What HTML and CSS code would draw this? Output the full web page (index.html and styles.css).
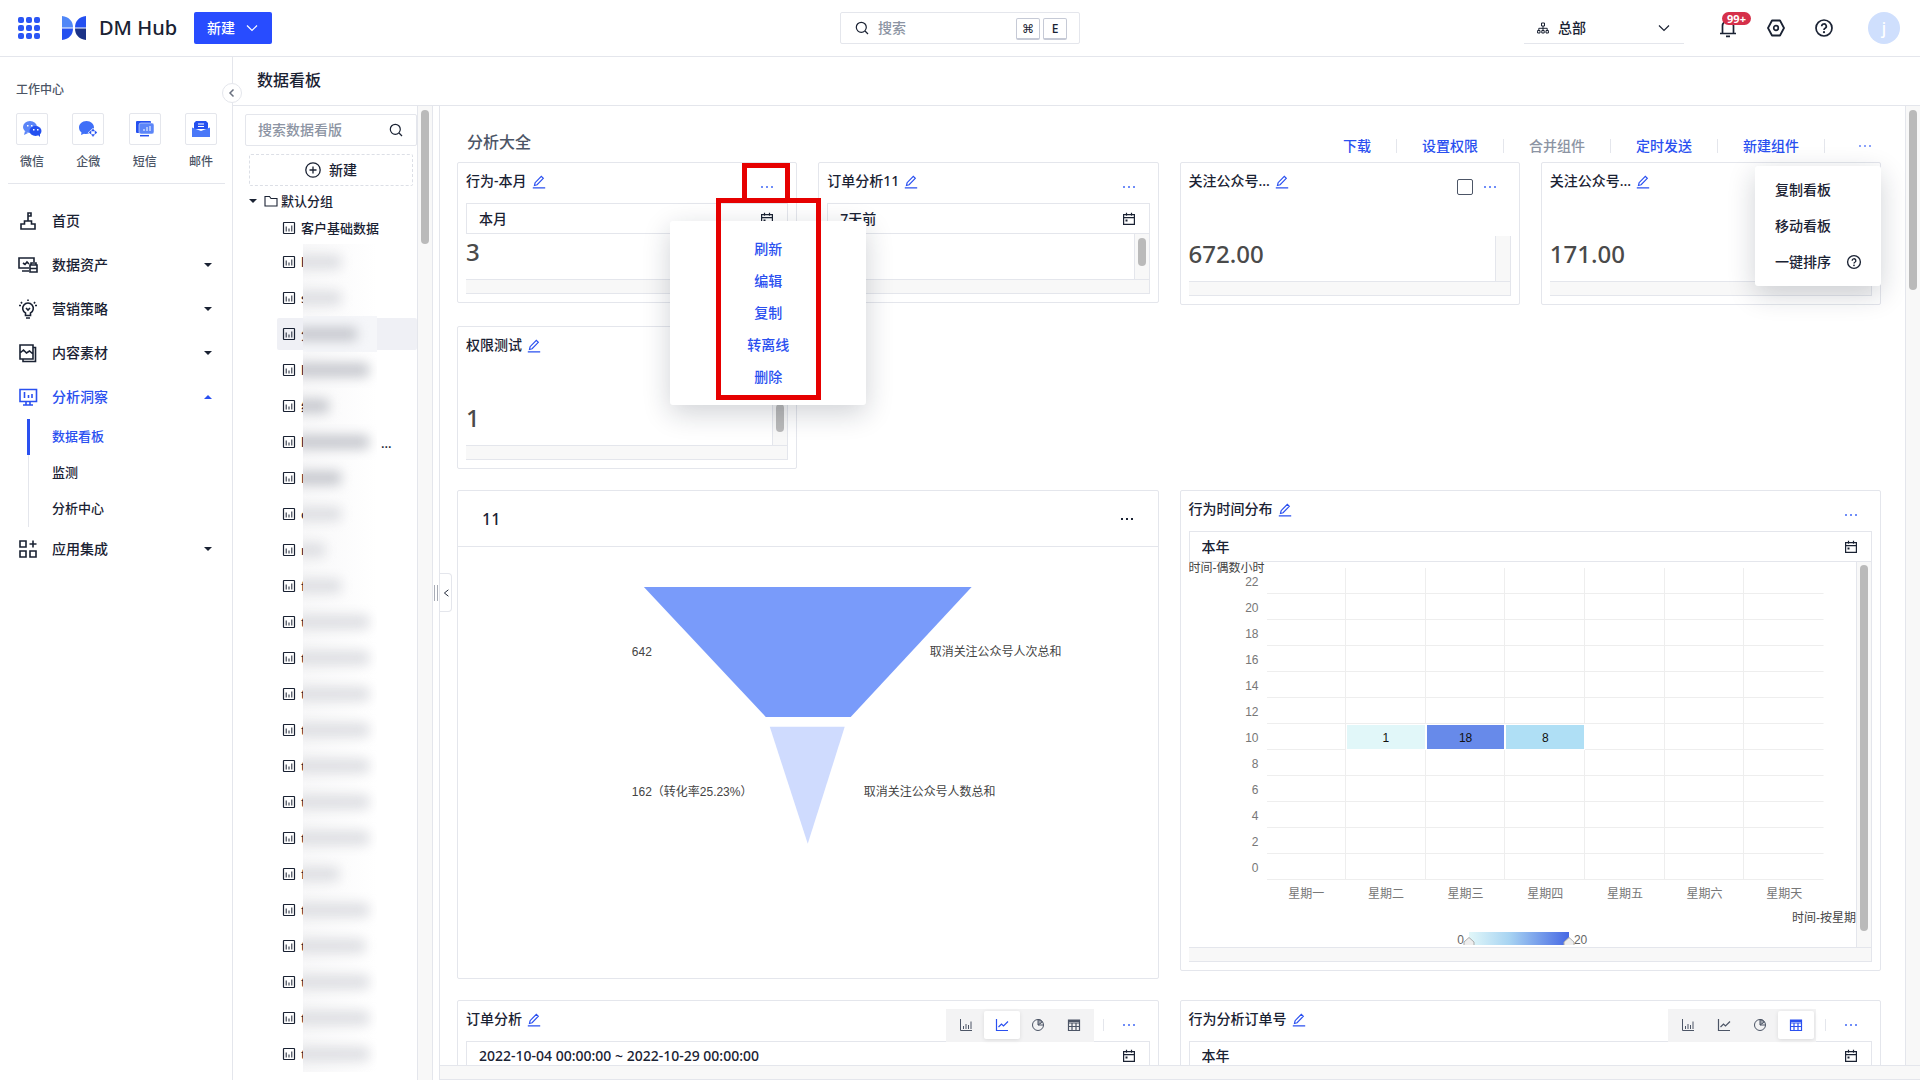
FILE: index.html
```html
<!DOCTYPE html>
<html lang="zh-CN">
<head>
<meta charset="utf-8">
<title>DM Hub - 数据看板</title>
<link rel="stylesheet" href="styles.css">
</head>
<body>
<svg class="sprite" aria-hidden="true">
  <symbol id="edit" viewBox="0 0 14 14"><path d="M2.5 10.5l.6-2.8 6.2-6.4 2 2-6.2 6.4zM.8 12.8h12.4" fill="none" stroke="currentColor" stroke-width="1.2"/></symbol>
  <symbol id="dots" viewBox="0 0 14 4"><path d="M1 1h2v2H1zM6 1h2v2H6zM11 1h2v2h-2z" fill="currentColor"/></symbol>
  <symbol id="calendar" viewBox="0 0 14 14"><path d="M1.6 2.6h10.8v9.8H1.600zM1.600 5.600h10.800M4.500.8v3M9.500.8v3" fill="none" stroke="currentColor" stroke-width="1.200"/><path d="M3.500 7.500h2v2h-2z" fill="currentColor"/></symbol>
  <symbol id="search" viewBox="0 0 14 14"><circle cx="6.300" cy="6.300" r="5" fill="none" stroke="currentColor" stroke-width="1.200"/><path d="M10 10l3 3" stroke="currentColor" stroke-width="1.200"/></symbol>
  <symbol id="board" viewBox="0 0 14 14"><rect x="1.500" y="1.500" width="11" height="11" rx=".5" fill="none" stroke="currentColor" stroke-width="1.200"/><path d="M4.200 5.500v5M7 7.500v3M9.800 4.500v6" stroke="currentColor"/></symbol>
  <symbol id="help" viewBox="0 0 20 20"><circle cx="10" cy="10" r="8" fill="none" stroke="currentColor" stroke-width="1.700"/><path d="M7.700 8.300a2.300 2.300 0 1 1 3.400 2c-.8.400-1.100.8-1.100 1.700" fill="none" stroke="currentColor" stroke-width="1.700"/><circle cx="10" cy="14.200" r="1.100" fill="currentColor"/></symbol>
  <symbol id="chevron" viewBox="0 0 12 12"><path d="M1 3.500l5 5 5-5" fill="none" stroke="currentColor" stroke-width="1.200"/></symbol>
  <symbol id="bars" viewBox="0 0 14 14"><path d="M1.500 1v11.500H13M4.500 8v3M7 6v5M9.500 7v4M12 3.500V11" fill="none" stroke="currentColor"/></symbol>
  <symbol id="line" viewBox="0 0 14 14"><path d="M1.500 1v11.500H13M3.500 9l3-3 2 2L13 3.500" fill="none" stroke="currentColor" stroke-width="1.200"/></symbol>
  <symbol id="pie" viewBox="0 0 14 14"><circle cx="7" cy="7" r="5.500" fill="none" stroke="currentColor"/><path d="M7 1.500V7l4.500-3A5.500 5.500 0 0 0 7 1.500zM7 7h5.500" fill="currentColor" fill-opacity=".5" stroke="currentColor"/></symbol>
  <symbol id="table" viewBox="0 0 14 14"><path d="M1.500 2h11v10.500h-11zM1.500 5h11M1.500 8.500h11M5 5v7.500M9 5v7.500" fill="none" stroke="currentColor" stroke-width="1.200"/><path d="M1.500 2h11v2h-11z" fill="currentColor"/></symbol>
</svg>

<header class="topbar">
  <div class="brand">
    <button class="icon-btn" aria-label="应用"><svg class="apps" viewBox="0 0 22 22"><g fill="#2b56f5"><rect width="6" height="6" rx="2"/><rect x="8" width="6" height="6" rx="2"/><rect x="16" width="6" height="6" rx="2"/><rect y="8" width="6" height="6" rx="2"/><rect x="8" y="8" width="6" height="6" rx="2"/><rect x="16" y="8" width="6" height="6" rx="2"/><rect y="16" width="6" height="6" rx="2"/><rect x="8" y="16" width="6" height="6" rx="2"/><rect x="16" y="16" width="6" height="6" rx="2"/></g></svg></button>
    <svg class="logo" viewBox="0 0 24 24"><path d="M0 0c7 1 11 5 11 11.500H0z" fill="#5087f7"/><path d="M0 12.500h11C11 19 7 23 0 24z" fill="#2450f0"/><path d="M24 0c-7 1-11 5-11 11.500h11z" fill="#2450f0"/><path d="M24 12.500H13C13 19 17 23 24 24z" fill="#1b3388"/></svg>
    <span class="brand-name">DM Hub</span>
    <button class="create">新建 <svg class="i12"><use href="#chevron"/></svg></button>
  </div>
  <label class="search"><svg class="i14"><use href="#search"/></svg><input type="text" placeholder="搜索" aria-label="搜索"><kbd>⌘</kbd><kbd>E</kbd></label>
  <div class="tools">
    <label class="org"><svg class="i12" viewBox="0 0 12 12"><path d="M4.500 1h3v3h-3zM.600 8.500h2.400v2.500H.600zM4.800 8.500h2.400v2.500H4.800zM9 8.500h2.400v2.500H9zM6 4v4.500M1.800 8.500V6.300h8.400v2.200" fill="none" stroke="currentColor"/></svg><select aria-label="组织"><option>总部</option></select><svg class="i12"><use href="#chevron"/></svg></label>
    <button class="icon-btn bell" aria-label="通知"><svg class="i20" viewBox="0 0 20 20"><path d="M4.500 15V8a5.500 5.500 0 0 1 11 0v7M2 15.500h16M8 18.300h4" fill="none" stroke="currentColor" stroke-width="1.700"/></svg><span class="badge">99+</span></button>
    <button class="icon-btn" aria-label="设置"><svg class="i20" viewBox="0 0 20 20"><path d="M6 2.500h8l4 7.500-4 7.500H6L2 10z" fill="none" stroke="currentColor" stroke-width="1.800" stroke-linejoin="round"/><circle cx="10" cy="10" r="2.300" fill="none" stroke="currentColor" stroke-width="1.700"/></svg></button>
    <button class="icon-btn" aria-label="帮助"><svg class="i20"><use href="#help"/></svg></button>
    <button class="avatar">j</button>
  </div>
</header>

<div class="shell">
  <aside class="sidebar">
    <p class="side-title">工作中心</p>
    <div class="quick">
      <a href="#"><span class="tile"><svg viewBox="0 0 20 20"><ellipse cx="8" cy="8" rx="7" ry="6" fill="#5b85f8"/><path d="M3 12l-1 4 4-2z" fill="#5b85f8"/><ellipse cx="13.500" cy="12" rx="6" ry="5" fill="#2450f0"/><path d="M15 15l3 3v-4z" fill="#2450f0"/><path d="M5 6h1.500v1.500H5zM9 6h1.500v1.500H9zM11 10h1.500v1.500H11zM15 10h1.500v1.500H15z" fill="#fff"/></svg></span>微信</a>
      <a href="#"><span class="tile"><svg viewBox="0 0 20 20"><path d="M8.500 2C4 2 1 5 1 8.500c0 2 1 4 2.500 5L3 16l3-1.300c4 1 10-1.200 10-6.200C16 5 13 2 8.500 2z" fill="#3f6ff8"/><path d="M15 9l5 4.500-5 5-5-5z" fill="#fff"/><path d="M15 10l1.500 2h-3zM19 13.500l-2 1.500v-3zM15 17.500l-1.500-2h3zM11 13.500l2-1.500v3z" fill="#2450f0" stroke="#2450f0" stroke-width=".5"/></svg></span>企微</a>
      <a href="#"><span class="tile"><svg viewBox="0 0 20 20"><rect x="1" y="2" width="15" height="12" rx="1" fill="#2450f0"/><rect x="4" y="4" width="15" height="11" rx="2" fill="#5b85f8" stroke="#fff" stroke-width=".5"/><path d="M5 16.700h9" stroke="#2450f0" stroke-width="1.500"/><path d="M9 10v2M12 8v4M15 7v5" stroke="#fff"/></svg></span>短信</a>
      <a href="#"><span class="tile"><svg viewBox="0 0 20 20"><path d="M5 2h10l2 2v6H3V4z" fill="#2450f0"/><path d="M7 5h6M7 7.500h6" stroke="#fff"/><path d="M1 8.500l9 3.500 9-3.500V18H1z" fill="#4a78f8"/></svg></span>邮件</a>
    </div>
    <nav class="nav">
      <a href="#"><svg viewBox="0 0 20 20"><path d="M3 18v-5h3.500V10h7v3H17v5zM10 10V2h3v3h-3"/></svg>首页</a>
      <a href="#"><svg viewBox="0 0 20 20"><path d="M11 13H1V3h15v4M4 16h7M5 8l2 1.500L9 7l2 2M12 10h7v7h-7zM12 13.500h7M13 10V8h5v2"/></svg>数据资产<i class="caret"></i></a>
      <a href="#"><svg viewBox="0 0 20 20"><path d="M7.500 14a5.300 5.300 0 1 1 5 0v2.500h-5zM8 19h4M10 .500V2M3 3l1 1.500M17 3l-1 1.500M1 6.500h2M17 6.500h2M8 9l2 2 2-2"/></svg>营销策略<i class="caret"></i></a>
      <a href="#"><svg viewBox="0 0 20 20"><path d="M2 2h13v14H2zM15 4.500h2.500v14H5V16M2 10l3.500-3 3 3 3-2 3.500 3"/></svg>内容素材<i class="caret"></i></a>
      <a href="#" class="active"><svg viewBox="0 0 20 20"><path d="M2 2.500h16.500v12H2zM6.500 5v6M10.500 8v3M14 7v4M5 18h10M8 15v3M12 15v3"/></svg>分析洞察<i class="caret up"></i></a>
      <div class="subnav">
        <a href="#" class="current">数据看板</a>
        <a href="#">监测</a>
        <a href="#">分析中心</a>
      </div>
      <a href="#"><svg viewBox="0 0 20 20"><path d="M2 2h6v6H2zM2 12h6v6H2zM12 12h6v6h-6zM15 1.500v7M11.500 5h7"/></svg>应用集成<i class="caret"></i></a>
    </nav>
    <button class="fold" aria-label="收起菜单"><svg viewBox="0 0 10 10"><path d="M6.500 1.500L3 5l3.500 3.500" fill="none" stroke="currentColor" stroke-width="1.500"/></svg></button>
  </aside>

  <div class="page">
    <h1 class="page-title">数据看板</h1>
    <div class="workspace">
      <section class="tree">
        <div class="tree-body">
          <label class="tree-search"><input type="text" placeholder="搜索数据看版" aria-label="搜索数据看版"><svg class="i14"><use href="#search"/></svg></label>
          <button class="tree-new"><svg class="i16" viewBox="0 0 16 16"><path d="M8 4.500v7M4.500 8h7" stroke="currentColor" stroke-width="1.300"/><circle cx="8" cy="8" r="7.200" fill="none" stroke="currentColor" stroke-width="1.300"/></svg>新建</button>
          <div class="tree-group"><i class="caret"></i><svg class="i14" viewBox="0 0 14 14"><path d="M1 12V2.500h4.500L7 4.500h6V12z" fill="none" stroke="currentColor" stroke-width="1.100"/></svg>默认分组</div>
          <ul class="boards">
            <li class="first"><svg class="i14"><use href="#board"/></svg>客户基础数据</li>
            <li><svg class="i14"><use href="#board"/></svg><b>h</b><i class="mask" style="--w:38px"></i></li>
            <li><svg class="i14"><use href="#board"/></svg><b>s</b><i class="mask" style="--w:38px"></i></li>
            <li class="selected"><svg class="i14"><use href="#board"/></svg><b>分</b><i class="mask dark" style="--w:54px"></i></li>
            <li><svg class="i14"><use href="#board"/></svg><b>l</b><i class="mask dark" style="--w:66px"></i></li>
            <li><svg class="i14"><use href="#board"/></svg><b>线</b><i class="mask dark" style="--w:26px"></i></li>
            <li><svg class="i14"><use href="#board"/></svg><b>l</b><i class="mask dark" style="--w:66px"></i><span class="more">...</span></li>
            <li><svg class="i14"><use href="#board"/></svg><b>L</b><i class="mask dark" style="--w:38px"></i></li>
            <li><svg class="i14"><use href="#board"/></svg><b>c</b><i class="mask" style="--w:38px"></i></li>
            <li><svg class="i14"><use href="#board"/></svg><b>r</b><i class="mask" style="--w:22px"></i></li>
            <li><svg class="i14"><use href="#board"/></svg><b>f</b><i class="mask" style="--w:38px"></i></li>
            <li><svg class="i14"><use href="#board"/></svg><b>t</b><i class="mask" style="--w:66px"></i></li>
            <li><svg class="i14"><use href="#board"/></svg><b>t</b><i class="mask" style="--w:66px"></i></li>
            <li><svg class="i14"><use href="#board"/></svg><b>t</b><i class="mask" style="--w:66px"></i></li>
            <li><svg class="i14"><use href="#board"/></svg><b>t</b><i class="mask" style="--w:66px"></i></li>
            <li><svg class="i14"><use href="#board"/></svg><b>t</b><i class="mask" style="--w:66px"></i></li>
            <li><svg class="i14"><use href="#board"/></svg><b>t</b><i class="mask" style="--w:66px"></i></li>
            <li><svg class="i14"><use href="#board"/></svg><b>t</b><i class="mask" style="--w:66px"></i></li>
            <li><svg class="i14"><use href="#board"/></svg><b>f</b><i class="mask" style="--w:36px"></i></li>
            <li><svg class="i14"><use href="#board"/></svg><b>t</b><i class="mask" style="--w:66px"></i></li>
            <li><svg class="i14"><use href="#board"/></svg><b>t</b><i class="mask" style="--w:62px"></i></li>
            <li><svg class="i14"><use href="#board"/></svg><b>t</b><i class="mask" style="--w:66px"></i></li>
            <li><svg class="i14"><use href="#board"/></svg><b>t</b><i class="mask" style="--w:66px"></i></li>
            <li><svg class="i14"><use href="#board"/></svg><b>t</b><i class="mask" style="--w:66px"></i></li>
          </ul>
        </div>
        <div class="vtrack"><i class="thumb tree-thumb"></i></div>
      </section>
      <div class="splitter"><i class="grip"></i><button class="pull" aria-label="收起列表"><svg viewBox="0 0 10 10"><path d="M8 1L3 5l5 4" fill="none" stroke="currentColor" stroke-width="1.200"/></svg></button></div>

      <main class="scrollbox main">
        <div class="view board">
          <div class="board-head">
            <h2>分析大全</h2>
            <div class="actions">
              <button>下载</button><button>设置权限</button><button class="off">合并组件</button><button>定时发送</button><button>新建组件</button><button class="last" aria-label="更多"><svg class="dots"><use href="#dots"/></svg></button>
            </div>
            <div class="menu board-menu">
              <button>复制看板</button><button>移动看板</button><button>一键排序 <svg class="i16"><use href="#help"/></svg></button>
            </div>
          </div>

          <div class="cards">
            <article class="card">
              <div class="card-head"><h3>行为-本月</h3><button class="link" aria-label="重命名"><svg class="i14"><use href="#edit"/></svg></button><button class="link dots-btn" aria-label="更多"><svg class="dots"><use href="#dots"/></svg></button></div>
              <label class="filter"><input type="text" value="本月" readonly aria-label="时间"><svg class="i14"><use href="#calendar"/></svg></label>
              <div class="scrollbox"><div class="view value">3</div><div class="vtrack"><i class="thumb small"></i></div><div class="htrack"></div></div>
              <div class="menu card-menu"><button>刷新</button><button>编辑</button><button>复制</button><button>转离线</button><button>删除</button></div>
              <i class="mark mark-dots"></i><i class="mark mark-menu"></i>
            </article>

            <article class="card">
              <div class="card-head"><h3>订单分析11</h3><button class="link" aria-label="重命名"><svg class="i14"><use href="#edit"/></svg></button><button class="link dots-btn" aria-label="更多"><svg class="dots"><use href="#dots"/></svg></button></div>
              <label class="filter"><input type="text" value="7天前" readonly aria-label="时间"><svg class="i14"><use href="#calendar"/></svg></label>
              <div class="scrollbox"><div class="view value"></div><div class="vtrack"><i class="thumb small"></i></div><div class="htrack"></div></div>
            </article>

            <article class="card plain">
              <div class="card-head"><h3>关注公众号...</h3><button class="link" aria-label="重命名"><svg class="i14"><use href="#edit"/></svg></button><input type="checkbox" class="pick" aria-label="选择组件"><button class="link dots-btn" aria-label="更多"><svg class="dots"><use href="#dots"/></svg></button></div>
              <div class="scrollbox"><div class="view value">672.00</div><div class="vtrack"></div><div class="htrack"></div></div>
            </article>

            <article class="card plain">
              <div class="card-head"><h3>关注公众号...</h3><button class="link" aria-label="重命名"><svg class="i14"><use href="#edit"/></svg></button></div>
              <div class="scrollbox"><div class="view value">171.00</div><div class="vtrack"></div><div class="htrack"></div></div>
            </article>

            <article class="card plain newrow">
              <div class="card-head"><h3>权限测试</h3><button class="link" aria-label="重命名"><svg class="i14"><use href="#edit"/></svg></button></div>
              <div class="scrollbox"><div class="view value">1</div><div class="vtrack"><i class="thumb small"></i></div><div class="htrack"></div></div>
            </article>

            <article class="card funnel-card newrow">
              <div class="funnel-head"><h3>11</h3><button class="dark-dots" aria-label="更多"><svg class="dots"><use href="#dots"/></svg></button></div>
              <svg class="funnel" viewBox="0 0 700 431" role="img" aria-label="漏斗图">
                <path d="M186 40h328L393 170h-85z" fill="#799bfa"/>
                <path d="M312 180h75l-37 117z" fill="#cfdbfe"/>
                <text x="174" y="109">642</text><text x="472" y="109">取消关注公众号人次总和</text>
                <text x="174" y="249">162（转化率25.23%）</text><text x="406" y="249">取消关注公众号人数总和</text>
              </svg>
            </article>

            <article class="card wide">
              <div class="card-head"><h3>行为时间分布</h3><button class="link" aria-label="重命名"><svg class="i14"><use href="#edit"/></svg></button><button class="link dots-btn" aria-label="更多"><svg class="dots"><use href="#dots"/></svg></button></div>
              <label class="filter"><input type="text" value="本年" readonly aria-label="时间"><svg class="i14"><use href="#calendar"/></svg></label>
              <div class="scrollbox tall">
                <div class="view heat">
                  <span class="axis-name">时间-偶数小时</span>
                  <div class="plot">
                    <div class="hours"><span>22</span><span>20</span><span>18</span><span>16</span><span>14</span><span>12</span><span>10</span><span>8</span><span>6</span><span>4</span><span>2</span><span>0</span></div>
                    <div class="grid">
                      <i></i><i></i><i></i><i></i><i></i><i></i><i></i>
                      <i></i><i></i><i></i><i></i><i></i><i></i><i></i>
                      <i></i><i></i><i></i><i></i><i></i><i></i><i></i>
                      <i></i><i></i><i></i><i></i><i></i><i></i><i></i>
                      <i></i><i></i><i></i><i></i><i></i><i></i><i></i>
                      <i></i><i></i><i></i><i></i><i></i><i></i><i></i>
                      <i></i><span class="v1">1</span><span class="v18">18</span><span class="v8">8</span><i></i><i></i><i></i>
                      <i></i><i></i><i></i><i></i><i></i><i></i><i></i>
                      <i></i><i></i><i></i><i></i><i></i><i></i><i></i>
                      <i></i><i></i><i></i><i></i><i></i><i></i><i></i>
                      <i></i><i></i><i></i><i></i><i></i><i></i><i></i>
                      <i></i><i></i><i></i><i></i><i></i><i></i><i></i>
                    </div>
                    <div class="days"><span>星期一</span><span>星期二</span><span>星期三</span><span>星期四</span><span>星期五</span><span>星期六</span><span>星期天</span></div>
                  </div>
                  <div class="axis-x">时间-按星期</div>
                  <div class="legend"><span>0</span><i class="ramp"><svg viewBox="0 0 12 8"><path d="M1 8V5l5-4.500L11 5v3" fill="#eee" stroke="#aaa"/></svg><svg viewBox="0 0 12 8"><path d="M1 8V5l5-4.500L11 5v3" fill="#eee" stroke="#aaa"/></svg></i><span>20</span></div>
                </div>
                <div class="vtrack"><i class="thumb heat-thumb"></i></div><div class="htrack"></div>
              </div>
            </article>

            <article class="card wide">
              <div class="card-head"><h3>订单分析</h3><button class="link" aria-label="重命名"><svg class="i14"><use href="#edit"/></svg></button>
                <div class="seg"><button aria-label="柱状图"><svg class="i14"><use href="#bars"/></svg></button><button class="on" aria-label="折线图"><svg class="i14"><use href="#line"/></svg></button><button aria-label="饼图"><svg class="i14"><use href="#pie"/></svg></button><button aria-label="表格"><svg class="i14"><use href="#table"/></svg></button></div>
                <button class="link dots-btn" aria-label="更多"><svg class="dots"><use href="#dots"/></svg></button></div>
              <label class="filter"><input type="text" value="2022-10-04 00:00:00 ~ 2022-10-29 00:00:00" readonly aria-label="时间"><svg class="i14"><use href="#calendar"/></svg></label>
            </article>

            <article class="card wide">
              <div class="card-head"><h3>行为分析订单号</h3><button class="link" aria-label="重命名"><svg class="i14"><use href="#edit"/></svg></button>
                <div class="seg"><button aria-label="柱状图"><svg class="i14"><use href="#bars"/></svg></button><button aria-label="折线图"><svg class="i14"><use href="#line"/></svg></button><button aria-label="饼图"><svg class="i14"><use href="#pie"/></svg></button><button class="on" aria-label="表格"><svg class="i14"><use href="#table"/></svg></button></div>
                <button class="link dots-btn" aria-label="更多"><svg class="dots"><use href="#dots"/></svg></button></div>
              <label class="filter"><input type="text" value="本年" readonly aria-label="时间"><svg class="i14"><use href="#calendar"/></svg></label>
            </article>
          </div>
        </div>
        <div class="vtrack"><i class="thumb main-thumb"></i></div>
        <div class="htrack"></div>
      </main>
    </div>
  </div>
</div>
</body>
</html>
```
FILE: styles.css
```css
:root {
  --ink: #1a2233;
  --blue: #2a50f0;
  --line: #e4e6ec;
  --track: #f8f8f8;
}
* { box-sizing: border-box; }
body {
  margin: 0;
  height: 100vh;
  display: flex;
  flex-direction: column;
  overflow: hidden;
  font: 500 14px/20px "Noto Sans", "Noto Sans CJK SC", sans-serif;
  color: var(--ink);
  background: #fff;
}
button, input, select { font: inherit; color: inherit; border: 0; padding: 0; background: none; outline: none; }
h1, h2, h3, p, ul { margin: 0; padding: 0; font: inherit; list-style: none; }
a { color: inherit; text-decoration: none; }
svg { display: block; flex: none; }
i { font-style: normal; }
.sprite { position: absolute; width: 0; height: 0; }
.i12 { width: 12px; height: 12px; }
.i14 { width: 14px; height: 14px; }
.i16 { width: 16px; height: 16px; }
.i20 { width: 20px; height: 20px; }
.dots { width: 14px; height: 4px; }

/* top bar */
.topbar {
  flex: none;
  display: grid;
  grid-template-columns: 1fr 240px 1fr;
  align-items: center;
  height: 57px;
  padding: 0 18px;
  border-bottom: 1px solid var(--line);
}
.brand, .tools { display: flex; align-items: center; }
.apps { width: 22px; height: 22px; }
.logo { width: 24px; height: 24px; margin-left: 22px; }
.brand-name { margin-left: 13px; font-size: 20px; line-height: 32px; width: 95px; }
.create { display: flex; align-items: center; justify-content: space-between; width: 78px; height: 32px; padding: 0 14px 0 13px; background: #284cff; color: #fff; border-radius: 2px; }
.search { display: flex; align-items: center; gap: 3px; height: 32px; padding: 0 12px 0 14px; border: 1px solid var(--line); border-radius: 2px; }
.search input { flex: 1; min-width: 0; padding-left: 6px; }
input::placeholder { color: #8c94a3; opacity: 1; }
kbd { width: 24px; height: 22px; margin-top: 2px; border: 1px solid #c6cad6; border-bottom-width: 2px; border-radius: 2px; font: 500 12px/19px "Noto Sans", "DejaVu Sans", sans-serif; text-align: center; }
.tools { justify-content: flex-end; padding-right: 2px; }
.icon-btn { display: block; position: relative; }
.tools .icon-btn { margin-right: 28px; }
.org { display: flex; align-items: center; width: 160px; height: 32px; padding: 0 14px 0 13px; margin-right: 34px; border-bottom: 1px solid var(--line); }
.org select { flex: 1; appearance: none; padding-left: 9px; }
.badge { position: absolute; left: 4px; top: -6px; width: 29px; height: 13px; border-radius: 7px; background: #d5304a; color: #fff; font-size: 11px; font-weight: 700; line-height: 13px; text-align: center; }
.avatar { width: 32px; height: 32px; margin-left: 6px; border-radius: 50%; background: #cfdffd; color: #fff; font-size: 16px; }

/* side navigation */
.shell { flex: 1; min-height: 0; display: flex; }
.sidebar { position: relative; flex: none; width: 233px; border-right: 1px solid var(--line); }
.side-title { padding: 23px 16px 13px; font-size: 12px; color: #4c5566; }
.quick { display: flex; justify-content: space-between; margin: 0 7px 0 8px; padding: 0 8px 11px; border-bottom: 1px solid var(--line); font-size: 12px; color: #4c5566; }
.quick a { display: flex; flex-direction: column; align-items: center; gap: 7px; }
.tile { display: grid; place-items: center; width: 32px; height: 32px; border: 1px solid var(--line); border-radius: 2px; }
.tile svg { width: 20px; height: 20px; }
.nav { padding-top: 15px; }
.nav > a { display: flex; align-items: center; gap: 14px; height: 44px; padding: 0 20px 0 18px; }
.nav > a svg { width: 20px; height: 20px; fill: none; stroke: currentColor; stroke-width: 1.6px; }
.caret { border: 4px solid transparent; border-top: 4px solid currentColor; border-bottom: 0; }
.nav .caret { margin-left: auto; }
.caret.up { border-bottom: 4px solid currentColor; border-top: 0; }
.active, .current { color: var(--blue); }
.subnav { margin-left: 28px; border-left: 1px solid var(--line); font-size: 13px; }
.subnav a { display: block; height: 36px; padding-left: 23px; line-height: 34px; }
.subnav .current { margin-left: -2px; border-left: 3px solid var(--blue); padding-left: 22px; }
.fold { position: absolute; right: -10px; top: 26px; width: 20px; height: 20px; border: 1px solid var(--line); border-radius: 50%; background: #fff; display: grid; place-items: center; z-index: 1; color: #6b7280; }
.fold svg { width: 10px; height: 10px; }

/* page */
.page { flex: 1; min-width: 0; display: flex; flex-direction: column; }
.page-title { flex: none; height: 49px; padding-left: 24px; font-size: 16px; line-height: 46px; border-bottom: 1px solid var(--line); }
.workspace { flex: 1; min-height: 0; display: flex; }

/* board tree */
.tree { flex: none; width: 200px; display: flex; overflow: hidden; border-right: 1px solid var(--line); }
.tree-body { flex: 1; padding: 8px 0 0 12px; min-width: 0; }
.tree-search { display: flex; align-items: center; height: 32px; padding: 0 13px 0 12px; border: 1px solid var(--line); border-radius: 2px; }
.tree-search input { flex: 1; min-width: 0; }
.tree-new { display: flex; align-items: center; justify-content: center; gap: 8px; width: calc(100% - 8px); height: 32px; margin: 8px 4px 0; border: 1px dashed #dcdfe6; border-radius: 2px; }
.tree-group { display: flex; align-items: center; gap: 3px; height: 27px; margin-top: 1px; padding-left: 4px; font-size: 13px; }
.tree-group .caret { margin-right: 4px; }
.boards { padding-left: 32px; font-size: 13px; }
.boards li { display: flex; align-items: center; height: 32px; margin-bottom: 4px; padding-left: 5px; border-radius: 2px; }
.boards .first { height: 28px; gap: 5px; }
.boards b { width: 7px; padding-left: 5px; font-weight: 500; white-space: nowrap; }
/* anonymised board names: a frosted strip over the text */
.mask { position: relative; flex: none; width: 74px; height: 36px; padding-top: 11px; overflow: hidden; background: linear-gradient(90deg, #f8f8f9, #fff); }
.mask::before { content: ""; display: block; width: calc(var(--w) + 8px); height: 14px; margin-left: -8px; border-radius: 4px; background: #dddee2; filter: blur(6px); }
.mask.dark::before { background: #c6c8ce; }
.boards .selected { background: #eff0f5; }
.selected .mask { background: #f5f6f9; }
.more { margin-left: 4px; line-height: 28px; padding-top: 2px; }
.vtrack { position: relative; width: 15px; background: var(--track); border-left: 1px solid var(--line); }
.thumb { position: absolute; left: 3px; width: 8px; border-radius: 4px; background: #bababa; }
.tree-thumb { top: 4px; height: 134px; }
.splitter { position: relative; flex: none; width: 7px; border-right: 1px solid var(--line); }
.grip { position: absolute; left: 1px; top: 479px; width: 4px; height: 16px; border: 1px solid #a8acb6; border-width: 0 1px; }
.pull { position: absolute; left: 7px; top: 467px; width: 12px; height: 39px; border: 1px solid var(--line); border-left: 0; border-radius: 0 4px 4px 0; background: #fff; z-index: 1; }
.pull svg { width: 8px; height: 10px; margin: auto; }

/* panes with scroll tracks */
.scrollbox { display: grid; grid-template-columns: minmax(0, 1fr) 15px; grid-template-rows: minmax(0, 1fr) 15px; }
.htrack { grid-column: 1 / 3; background: var(--track); border: solid var(--line); border-width: 1px 0; }
.view { overflow: hidden; }
.main { flex: 1; min-width: 0; }
.main-thumb { top: 4px; height: 180px; }

/* board */
.board { padding: 0 24px 0 17px; }
.board-head { position: relative; display: flex; justify-content: space-between; height: 56px; }
.board-head h2 { padding: 26px 0 0 10px; font-size: 16px; color: #4c5566; }
.actions { display: flex; align-items: center; height: 24px; margin-top: 28px; }
.actions button { padding: 0 25px; height: 14px; line-height: 14px; border-right: 1px solid var(--line); color: var(--blue); }
.actions .off { color: #8c94a3; }
.actions .last { padding: 0 9px 0 33px; border: 0; color: #8ba2fa; }
.menu { position: absolute; z-index: 3; display: flex; flex-direction: column; background: #fff; border-radius: 3px; box-shadow: 0 8px 28px rgba(20, 30, 50, .2); }
.board-menu { right: 0; top: 60px; width: 126px; padding: 6px 0; }
.board-menu button { display: flex; align-items: center; justify-content: space-between; height: 36px; padding: 0 19px 0 20px; }
.card-menu { right: -70px; top: 58px; width: 196px; padding: 12px 0; }
.card-menu button { height: 32px; color: var(--blue); }
.mark { position: absolute; z-index: 4; border: 5px solid #e60000; }
.mark-dots { right: 6px; top: 0; width: 48px; height: 40px; }
.mark-menu { right: -25px; top: 35px; width: 105px; height: 202px; }

/* cards */
.cards { display: grid; grid-template-columns: repeat(4, minmax(0, 1fr)); gap: 21px; align-items: start; }
.card { position: relative; padding: 0 8px 8px; border: 1px solid var(--line); border-radius: 2px; }
.newrow { grid-column-start: 1; }
.wide { grid-column-end: span 2; }
.card-head { display: flex; height: 40px; padding-top: 8px; }
.card-head .link { margin: 4px 0 0 5px; height: 14px; color: var(--blue); }
.card-head .dots-btn { height: 4px; margin: 14px 14px 0 auto; color: #6f8df8; }
.pick { appearance: none; width: 16px; height: 16px; margin: 8px 10px 0 auto; border: 1px solid #4c5566; border-radius: 2px; }
.card-head .pick + .dots-btn { margin-left: 0; }
.plain .card-head { height: 73px; }
.filter { display: flex; align-items: center; height: 31px; padding: 0 13px 0 12px; border: 1px solid var(--line); }
.filter input { flex: 1; min-width: 0; }
.card .scrollbox { height: 60px; border-right: 1px solid var(--line); }
.card .tall { height: 400px; }
.value { font-size: 24px; line-height: 36px; color: #4a4a4a; }
.small { top: 4px; height: 28px; }
.seg { display: flex; align-items: center; margin-left: auto; height: 33px; padding: 0 2px; background: #f3f3f4; color: #4c5566; }
.seg button { display: grid; place-items: center; width: 36px; height: 28px; border-radius: 2px; }
.seg .on { background: #fff; color: var(--blue); box-shadow: 0 1px 4px rgba(0, 0, 0, .1); }
.card-head .seg + .dots-btn { height: 12px; margin: 10px 14px 0 9px; padding-left: 18px; border-left: 1px solid var(--line); }

/* funnel */
.funnel-card { grid-column: 1 / 3; padding: 0; }
.funnel-head { display: flex; justify-content: space-between; align-items: center; height: 56px; padding: 0 24px; border-bottom: 1px solid var(--line); font-size: 16px; }
.funnel { width: 100%; height: auto; }
.funnel text { font: 12px "Liberation Sans", "Noto Sans CJK SC", sans-serif; fill: #444; }

/* heat map */
.heat { display: flex; flex-direction: column; font: 12px/16px "Liberation Sans", "Noto Sans CJK SC", sans-serif; color: #444; }
.axis-name { height: 6px; line-height: 12px; }
.plot { display: grid; grid-template-columns: 78px minmax(0, 1fr); padding-right: 32px; color: #777; }
.hours { display: grid; grid-auto-rows: 26px; line-height: 28px; padding-right: 8px; text-align: right; }
.grid { display: grid; grid-template-columns: repeat(7, 1fr); grid-auto-rows: 26px; }
.grid > * { border: solid #eee; border-width: 0 1px 1px 0; }
.grid > :nth-child(7n) { border-right-color: transparent; }
.grid span { border: 1px solid #fff; color: #111; line-height: 26px; text-align: center; }
.v1 { background: #e1f7f9; }
.v18 { background: #678aea; }
.v8 { background: #afdff5; }
.days { grid-column: 2; display: grid; grid-template-columns: repeat(7, 1fr); padding-top: 6px; text-align: center; }
.axis-x { text-align: right; margin-top: 8px; }
.legend { display: flex; justify-content: center; gap: 5px; margin-top: 6px; color: #666; }
.ramp { display: flex; justify-content: space-between; align-items: flex-end; width: 100px; height: 13px; background: linear-gradient(90deg, #e1f7f9, #a8d4f2 40%, #4668e4); }
.ramp svg { width: 12px; height: 8px; margin: 0 -6px; }
.heat-thumb { top: 3px; height: 366px; }
```
